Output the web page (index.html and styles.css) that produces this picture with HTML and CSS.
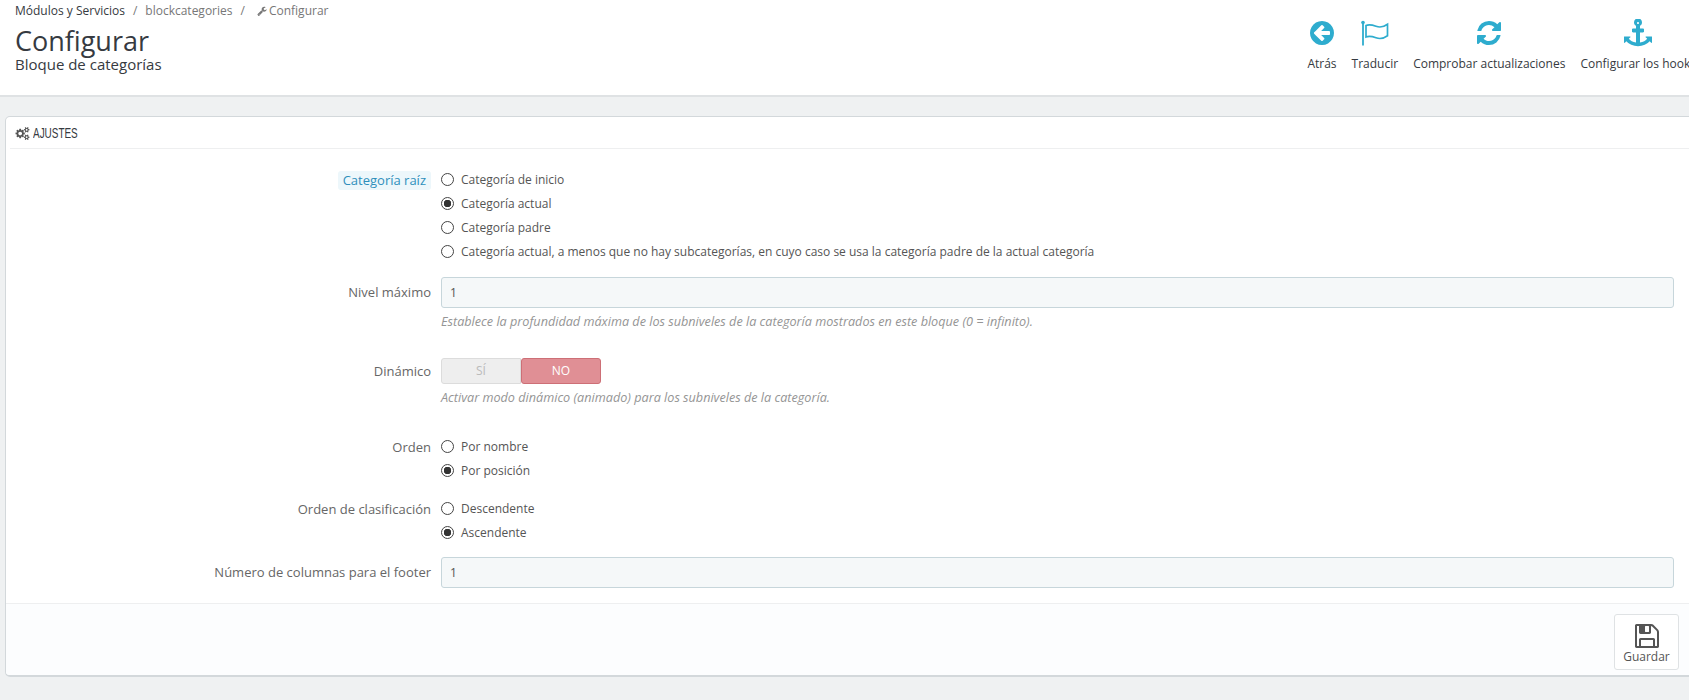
FILE: index.html
```html
<!DOCTYPE html>
<html lang="es">
<head>
<meta charset="utf-8">
<title>Configurar</title>
<link rel="stylesheet" href="styles.css">
</head>
<body>
<div class="page">
  <header class="page-head">
    <div class="titles">
      <nav class="crumbs">
        <span class="crumb-first">Módulos y Servicios</span><span class="sep">/</span><span>blockcategories</span><span class="sep">/</span>
        <svg class="wrench" viewBox="0 0 1792 1792"><path d="M448 1472q0-26-19-45t-45-19-45 19-19 45 19 45 45 19 45-19 19-45zm644-420l-682 682q-37 37-90 37-52 0-91-37l-106-108q-38-36-38-90 0-53 38-91l681-681q39 98 114.5 173.5t173.5 114.5zm634-435q0 39-23 106-47 134-164.5 217.5t-258.5 83.5q-185 0-316.5-131.5t-131.5-316.5 131.5-316.5 316.5-131.5q58 0 121.5 16.5t107.5 46.5q16 11 16 28t-16 28l-293 169v224l193 107q5-3 79-48.5t135.5-81 70.5-35.5q15 0 23.5 10t8.5 25z"/></svg><span>Configurar</span>
      </nav>
      <h1>Configurar</h1>
      <h2>Bloque de categorías</h2>
    </div>
    <div class="toolbar">
      <a class="tool">
        <svg class="tool-icon" viewBox="0 0 1792 1792"><path d="M1408 960v-128q0-26-19-45t-45-19h-502l189-189q19-19 19-45t-19-45l-91-91q-18-18-45-18t-45 18l-362 362-91 91q-18 18-18 45t18 45l91 91 362 362q18 18 45 18t45-18l91-91q18-18 18-45t-18-45l-189-189h502q26 0 45-19t19-45zm256-64q0 209-103 385.5t-279.5 279.5-385.5 103-385.5-103-279.5-279.5-103-385.5 103-385.5 279.5-279.5 385.5-103 385.5 103 279.5 279.5 103 385.5z"/></svg>
        <span>Atrás</span>
      </a>
      <a class="tool">
        <svg class="tool-icon flag" viewBox="0 0 29 28"><circle cx="3" cy="3.600" r="1.800"/><rect x="2.100" y="4" width="1.800" height="22.500"/><path class="flag-line" d="M6 6.500c3.500-1.500 6.500-.5 10 .8 4 1.400 8 .5 11.500-2v11.500c-3.500 2.500-7.500 3.400-11.500 2-3.500-1.300-6.500-2.300-10-.8z"/></svg>
        <span>Traducir</span>
      </a>
      <a class="tool">
        <svg class="tool-icon" viewBox="0 0 1792 1792"><path d="M1639 1056q0 5-1 7-64 268-268 434.500t-478 166.500q-146 0-282.500-55t-243.500-157l-129 129q-19 19-45 19t-45-19-19-45v-448q0-26 19-45t45-19h448q26 0 45 19t19 45-19 45l-137 137q71 66 161 102t187 36q134 0 250-65t186-179q11-17 53-117 8-23 30-23h192q13 0 22.500 9.500t9.500 22.500zm25-800v448q0 26-19 45t-45 19h-448q-26 0-45-19t-19-45 19-45l138-138q-148-137-349-137-134 0-250 65t-186 179q-11 17-53 117-8 23-30 23h-199q-13 0-22.500-9.500t-9.500-22.500v-7q65-268 270-434.500t480-166.500q146 0 284 55.500t245 156.500l130-129q19-19 45-19t45 19 19 45z"/></svg>
        <span>Comprobar actualizaciones</span>
      </a>
      <a class="tool">
        <svg class="tool-icon" viewBox="0 0 1792 1792"><path d="M960 256q0-26-19-45t-45-19-45 19-19 45 19 45 45 19 45-19 19-45zm832 888v352q0 22-20 30-8 2-12 2-12 0-23-9l-93-93q-119 143-318.500 226.500t-429.500 83.500-429.500-83.500-318.500-226.500l-93 93q-9 9-23 9-4 0-12-2-20-8-20-30v-352q0-14 9-23t23-9h352q22 0 30 20 8 19-7 35l-100 100q67 91 189.500 153.500t271.500 82.500v-647h-192q-26 0-45-19t-19-45v-128q0-26 19-45t45-19h192v-163q-58-34-93-92.500t-35-128.500q0-106 75-181t181-75 181 75 75 181q0 70-35 128.500t-93 92.500v163h192q26 0 45 19t19 45v128q0 26-19 45t-45 19h-192v647q149-20 271.500-82.500t189.500-153.500l-100-100q-15-16-7-35 8-20 30-20h352q14 0 23 9t9 23z"/></svg>
        <span>Configurar los hooks</span>
      </a>
    </div>
  </header>

  <main class="content">
    <section class="panel">
      <div class="panel-head">
        <svg class="cogs" viewBox="0 0 2048 1792"><path d="M960 896q0-106-75-181t-181-75-181 75-75 181 75 181 181 75 181-75 75-181zm768 512q0-52-38-90t-90-38-90 38-38 90q0 53 37.500 90.500t90.500 37.500 90.500-37.500 37.500-90.500zm0-1024q0-52-38-90t-90-38-90 38-38 90q0 53 37.500 90.500t90.500 37.500 90.500-37.500 37.500-90.500zm-384 421v185q0 10-7 19.500t-16 10.500l-155 24q-11 35-32 76 34 48 90 115 7 11 7 20 0 12-7 19-23 30-82.500 89.500t-78.500 59.500q-11 0-21-7l-115-90q-37 19-77 31-11 108-23 155-7 24-30 24h-186q-11 0-20-7.500t-10-17.500l-23-153q-34-10-75-31l-118 89q-7 7-20 7-11 0-21-8-144-133-144-160 0-9 7-19 10-14 41-53t47-61q-23-44-35-82l-152-24q-10-1-17-9.500t-7-19.500v-185q0-10 7-19.500t16-10.500l155-24q11-35 32-76-34-48-90-115-7-11-7-20 0-12 7-20 22-30 82-89t79-59q11 0 21 7l115 90q34-18 77-32 11-108 23-154 7-24 30-24h186q11 0 20 7.500t10 17.500l23 153q34 10 75 31l118-89q8-7 20-7 11 0 21 8 144 133 144 160 0 8-7 19-12 16-42 54t-45 60q23 48 34 82l152 23q10 2 17 10.500t7 19.500zm640 533v140q0 16-149 31-12 27-30 52 51 113 51 138 0 4-4 7-122 71-124 71-8 0-46-47t-52-68q-20 2-30 2t-30-2q-14 21-52 68t-46 47q-2 0-124-71-4-3-4-7 0-25 51-138-18-25-30-52-149-15-149-31v-140q0-16 149-31 13-29 30-52-51-113-51-138 0-4 4-7 4-2 35-20t59-34 30-16q8 0 46 46.500t52 67.500q20-2 30-2t30 2q51-71 92-112l6-2q4 0 124 70 4 3 4 7 0 25-51 138 17 23 30 52 149 15 149 31zm0-1024v140q0 16-149 31-12 27-30 52 51 113 51 138 0 4-4 7-122 71-124 71-8 0-46-47t-52-68q-20 2-30 2t-30-2q-14 21-52 68t-46 47q-2 0-124-71-4-3-4-7 0-25 51-138-18-25-30-52-149-15-149-31v-140q0-16 149-31 13-29 30-52-51-113-51-138 0-4 4-7 4-2 35-20t59-34 30-16q8 0 46 46.500t52 67.500q20-2 30-2t30 2q51-71 92-112l6-2q4 0 124 70 4 3 4 7 0 25-51 138 17 23 30 52 149 15 149 31z"/></svg>
        <span class="panel-title">AJUSTES</span>
      </div>

      <form class="form">
        <div class="row row-root">
          <div class="label"><span class="label-tag">Categoría raíz</span></div>
          <div class="radios">
            <label class="radio"><input type="radio" name="root"><span>Categoría de inicio</span></label>
            <label class="radio"><input type="radio" name="root" checked><span>Categoría actual</span></label>
            <label class="radio"><input type="radio" name="root"><span>Categoría padre</span></label>
            <label class="radio"><input type="radio" name="root"><span>Categoría actual, a menos que no hay subcategorías, en cuyo caso se usa la categoría padre de la actual categoría</span></label>
          </div>
        </div>

        <div class="row row-level">
          <div class="label label-input">Nivel máximo</div>
          <div>
            <input class="text" type="text" value="1">
            <p class="help">Establece la profundidad máxima de los subniveles de la categoría mostrados en este bloque (0 = infinito).</p>
          </div>
        </div>

        <div class="row row-dyn">
          <div class="label label-switch">Dinámico</div>
          <div>
            <div class="switch"><span class="sw-yes">SÍ</span><span class="sw-no">NO</span></div>
            <p class="help">Activar modo dinámico (animado) para los subniveles de la categoría.</p>
          </div>
        </div>

        <div class="row row-order">
          <div class="label">Orden</div>
          <div class="radios">
            <label class="radio"><input type="radio" name="order"><span>Por nombre</span></label>
            <label class="radio"><input type="radio" name="order" checked><span>Por posición</span></label>
          </div>
        </div>

        <div class="row row-sort">
          <div class="label">Orden de clasificación</div>
          <div class="radios">
            <label class="radio"><input type="radio" name="sort"><span>Descendente</span></label>
            <label class="radio"><input type="radio" name="sort" checked><span>Ascendente</span></label>
          </div>
        </div>

        <div class="row row-cols">
          <div class="label label-input">Número de columnas para el footer</div>
          <div><input class="text" type="text" value="1"></div>
        </div>
      </form>

      <div class="panel-foot">
        <button class="save" type="button">
          <svg class="save-icon" viewBox="0 0 1792 1792"><path d="M512 1536h768v-384h-768v384zm896 0h128v-896q0-14-10-38.500t-20-34.500l-281-281q-10-10-34-20t-39-10v416q0 40-28 68t-68 28h-576q-40 0-68-28t-28-68v-416h-128v1280h128v-416q0-40 28-68t68-28h832q40 0 68 28t28 68v416zm-384-928v-320q0-13-9.500-22.500t-22.500-9.500h-192q-13 0-22.500 9.500t-9.500 22.500v320q0 13 9.500 22.500t22.500 9.500h192q13 0 22.500-9.500t9.500-22.500zm640 32v928q0 40-28 68t-68 28h-1344q-40 0-68-28t-28-68v-1344q0-40 28-68t68-28h928q40 0 88 20t76 48l280 280q28 28 48 76t20 88z"/></svg>
          <span>Guardar</span>
        </button>
      </div>
    </section>
  </main>
</div>
</body>
</html>
```
FILE: styles.css
```css
* { box-sizing: border-box; }
html, body { margin: 0; height: 100%; overflow: hidden; background: #eff1f2; }
body { font-family: "Open Sans", "Liberation Sans", sans-serif; font-size: 12px; color: #555; }
.page { width: 1725px; }

.page-head {
  display: flex;
  justify-content: space-between;
  height: 97px;
  background: #fff;
  border-bottom: 2px solid #dfe2e4;
  padding: 0 29px 0 15px;
}
.crumbs { display: flex; align-items: center; height: 21px; color: #777; line-height: 21px; }
.crumb-first { color: #363a41; }
.sep { margin: 0 8px; color: #777; }
.wrench { width: 10px; height: 10px; margin: 0 2px 0 4px; fill: #777; }
h1 { margin: 4px 0 0; font-size: 27px; font-weight: 400; line-height: 31px; color: #363a41; }
h2 { margin: 0; font-size: 15px; font-weight: 400; line-height: 17px; color: #363a41; }

.toolbar { display: flex; gap: 15px; padding-top: 19px; }
.tool { display: flex; flex-direction: column; align-items: center; color: #363a41; }
.tool-icon { width: 28px; height: 28px; fill: #2eacce; display: block; }
.tool span { margin-top: 9px; line-height: 16px; }
.flag { width: 29px; }
.flag-line { fill: none; stroke: #2eacce; stroke-width: 1.7; }

.content { padding: 19px 0 0 5px; }
.panel {
  background: #fff;
  border: 1px solid #d3d8db;
  border-bottom-width: 2px;
  border-radius: 5px 0 0 5px;
  height: 561px;
  display: flex;
  flex-direction: column;
  overflow: hidden;
}
.panel-head {
  display: flex;
  align-items: center;
  gap: 3px;
  height: 32px;
  margin-left: 4px;
  padding-left: 5px;
  padding-top: 1px;
  border-bottom: 1px solid #eeeff0;
  color: #363a41;
}
.panel-title {
  font-family: "Liberation Sans", sans-serif;
  font-size: 14px;
  transform: scaleX(0.71);
  transform-origin: left center;
}
.cogs { width: 15px; height: 13px; fill: #555; }

.form { flex: 1; padding-top: 20px; }
.row { display: grid; grid-template-columns: 425px 1233px; column-gap: 10px; }
.label { text-align: right; color: #666; line-height: 20px; font-size: 13px; }
.label-tag {
  display: inline-block;
  height: 19px;
  line-height: 18px;
  padding: 0 5px;
  background: #edf7fb;
  border-radius: 3px;
  color: #2f8fbb;
}
.label-input { line-height: 31px; }
.label-switch { line-height: 26px; }

.radios { display: flex; flex-direction: column; gap: 5px; }
.radio { display: flex; align-items: center; gap: 7px; height: 19px; color: #555; }
.radio input {
  appearance: none;
  width: 13px;
  height: 13px;
  margin: 0;
  border: 1px solid #444;
  border-radius: 50%;
  background: #fff;
  flex: none;
}
.radio input:checked { background: radial-gradient(circle, #333 0 3.500px, #fff 4px); }

.row-root { height: 108px; padding-top: 1px; }
.row-level { height: 81px; }
.row-dyn { height: 79px; }
.row-order { height: 62px; }
.row-sort { height: 58px; }

.text {
  display: block;
  width: 100%;
  height: 31px;
  padding: 0 8px;
  border: 1px solid #c7d6db;
  border-radius: 3px;
  background: #f5f8f9;
  font: 12px "Open Sans", "Liberation Sans", sans-serif;
  color: #555;
}
.help { margin: 5px 0 0; line-height: 17px; font-size: 12.650px; font-style: italic; color: #959595; }

.switch { display: flex; width: 160px; height: 26px; text-align: center; line-height: 24px; }
.sw-yes {
  width: 80px;
  background: #eee;
  border: 1px solid #dcdcdc;
  border-radius: 3px 0 0 3px;
  color: #bbb;
}
.sw-no {
  width: 80px;
  background: #e08f95;
  border: 1px solid #cd6f76;
  border-radius: 3px;
  color: #fff;
}

.panel-foot {
  display: flex;
  height: 72px;
  padding: 10px 0 0 1608px;
  background: #fcfdfe;
  border-top: 1px solid #eeeff0;
}
.save {
  display: flex;
  flex-direction: column;
  align-items: center;
  width: 65px;
  height: 56px;
  padding: 7px 0 0;
  background: #fff;
  border: 1px solid #dfe2e4;
  border-radius: 3px;
  font: 12px "Open Sans", "Liberation Sans", sans-serif;
  color: #555;
}
.save-icon { width: 28px; height: 28px; fill: #555; display: block; }
.save span { line-height: 16px; margin-top: -1px; }
```
